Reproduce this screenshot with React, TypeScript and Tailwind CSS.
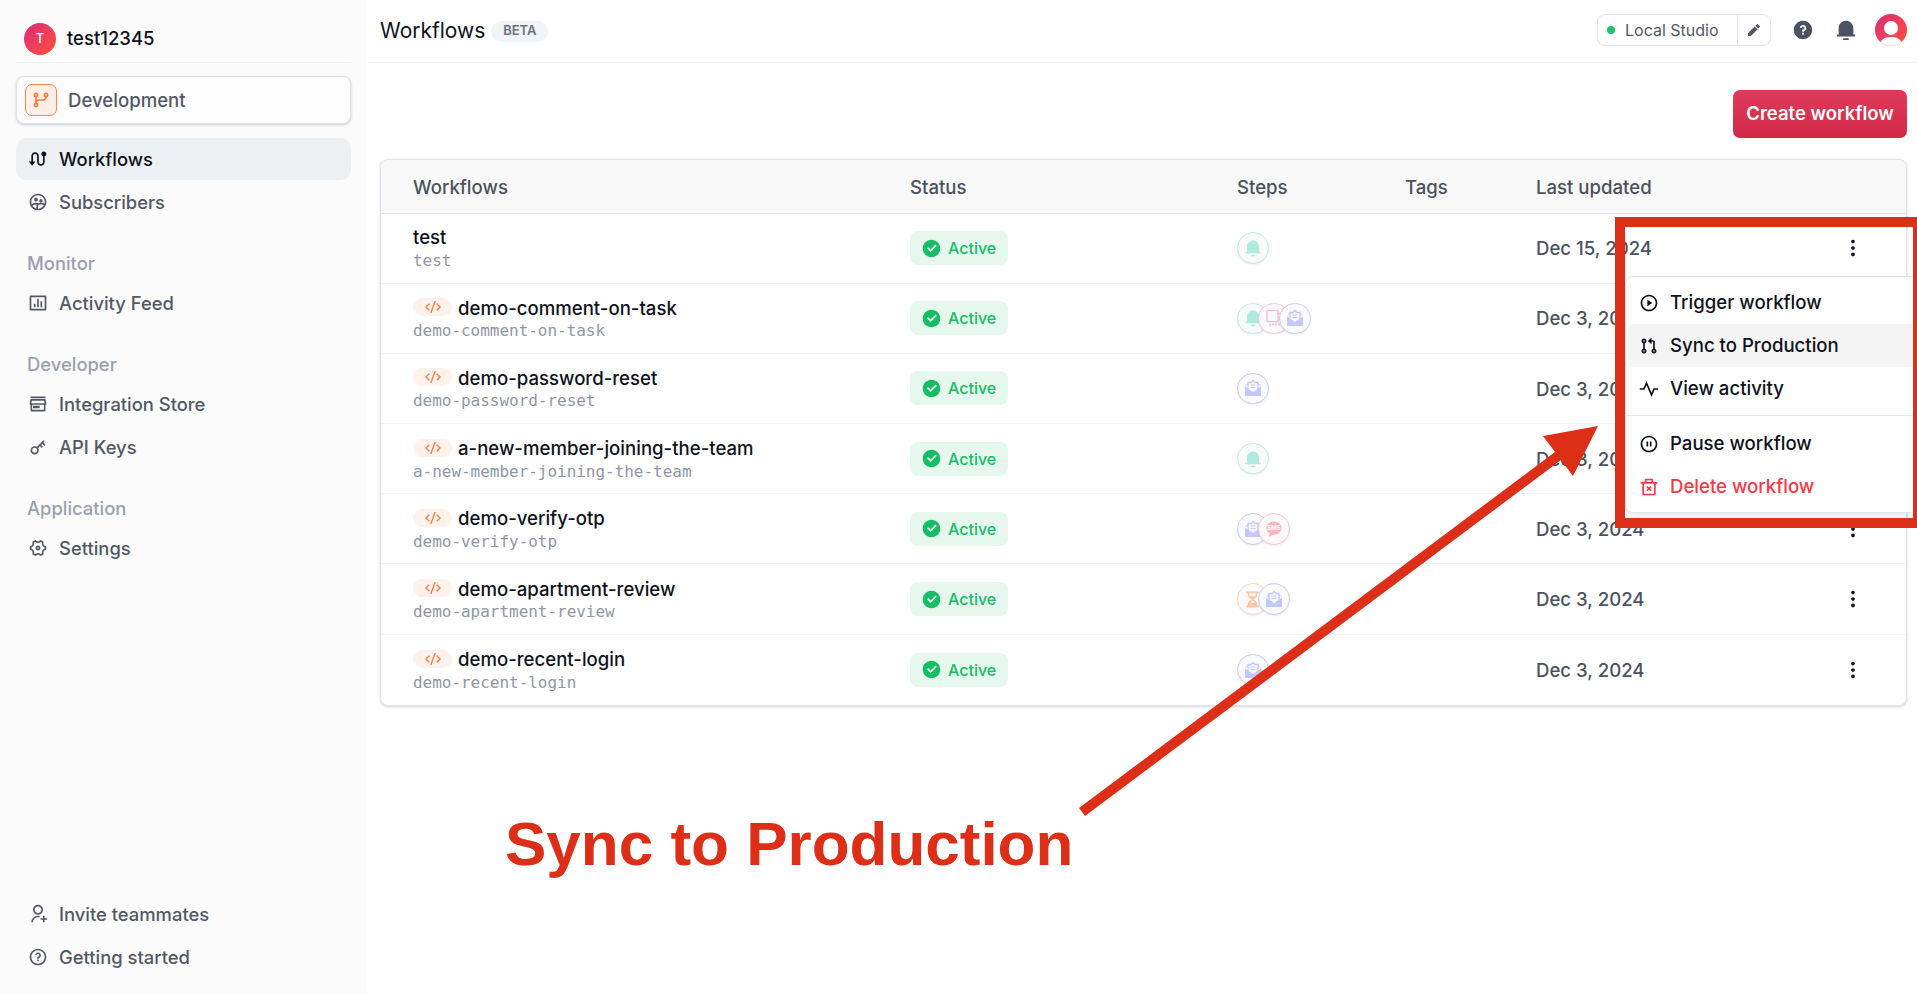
import type { ComponentType, ReactNode } from "react";
import {
  RiBarChartBoxLine,
  RiCheckboxCircleFill,
  RiCodeSSlashLine,
  RiDeleteBin2Line,
  RiGitBranchLine,
  RiGitPullRequestLine,
  RiGroup2Line,
  RiHourglassFill,
  RiKey2Line,
  RiMore2Fill,
  RiNotification3Fill,
  RiPauseCircleLine,
  RiPencilFill,
  RiPlayCircleLine,
  RiPulseFill,
  RiQuestionFill,
  RiQuestionLine,
  RiRouteFill,
  RiSettings4Line,
  RiStore3Line,
  RiUserAddLine,
} from "react-icons/ri";

type IconType = ComponentType<{ className?: string }>;
type Step = "bell" | "mail" | "layout" | "sms" | "wait";

const rows: { name: string; code: boolean; steps: Step[]; date: string }[] = [
  { name: "test", code: false, steps: ["bell"], date: "Dec 15, 2024" },
  { name: "demo-comment-on-task", code: true, steps: ["bell", "layout", "mail"], date: "Dec 3, 2024" },
  { name: "demo-password-reset", code: true, steps: ["mail"], date: "Dec 3, 2024" },
  { name: "a-new-member-joining-the-team", code: true, steps: ["bell"], date: "Dec 3, 2024" },
  { name: "demo-verify-otp", code: true, steps: ["mail", "sms"], date: "Dec 3, 2024" },
  { name: "demo-apartment-review", code: true, steps: ["wait", "mail"], date: "Dec 3, 2024" },
  { name: "demo-recent-login", code: true, steps: ["mail"], date: "Dec 3, 2024" },
];

function NavItem({ icon: Icon, label, active }: { icon: IconType; label: string; active?: boolean }) {
  return (
    <div
      className={`flex h-[42px] items-center gap-[11px] rounded-[10px] px-3 text-[18.4px] font-medium ${
        active ? "bg-[#edf0f3] text-[#0e121b]" : "text-[#525866]"
      }`}
    >
      <Icon className="h-5 w-5 shrink-0" />
      <span className="pt-[1px]">{label}</span>
    </div>
  );
}

function NavSection({ title, children }: { title: string; children: ReactNode }) {
  return (
    <div className="mt-[28px] flex flex-col gap-px">
      <div className="mb-[6px] h-6 px-[11px] text-[18.4px] font-medium leading-6 text-[#99a0ae]">{title}</div>
      {children}
    </div>
  );
}

function Sidebar() {
  return (
    <aside className="flex h-full w-[367px] shrink-0 flex-col bg-[#fbfbfb] px-4 pb-4">
      <div className="flex h-[63px] items-center gap-[11px] border-b border-[#eff0f4] pl-2 pt-[16px]">
        <div className="flex h-8 w-8 items-center justify-center rounded-full bg-gradient-to-br from-[#dd2476] to-[#ff512f] text-[13px] font-medium text-white">
          T
        </div>
        <span className="text-[18.5px] font-medium text-[#0e121b]">test12345</span>
      </div>
      <div className="mt-[13px] flex h-[48px] items-center gap-[11px] rounded-[8px] border border-[#dfe3ec] bg-[#fdfdfd] pl-2 text-[18.6px] font-medium text-[#525866] shadow-[0_1px_3px_rgba(14,18,27,0.2)]">
        <div className="flex h-8 w-8 items-center justify-center rounded-[7px] border border-[#ff8447] bg-[#fdeee6] text-[#ff7a3d]">
          <RiGitBranchLine className="h-5 w-5" />
        </div>
        <span className="pt-[1px]">Development</span>
      </div>
      <div className="mt-[14px] flex flex-col gap-px">
        <NavItem icon={RiRouteFill} label="Workflows" active />
        <NavItem icon={RiGroup2Line} label="Subscribers" />
      </div>
      <NavSection title="Monitor">
        <NavItem icon={RiBarChartBoxLine} label="Activity Feed" />
      </NavSection>
      <NavSection title="Developer">
        <NavItem icon={RiStore3Line} label="Integration Store" />
        <NavItem icon={RiKey2Line} label="API Keys" />
      </NavSection>
      <NavSection title="Application">
        <NavItem icon={RiSettings4Line} label="Settings" />
      </NavSection>
      <div className="mt-auto flex flex-col gap-px">
        <NavItem icon={RiUserAddLine} label="Invite teammates" />
        <NavItem icon={RiQuestionLine} label="Getting started" />
      </div>
    </aside>
  );
}

function TopBar() {
  return (
    <header className="flex h-[63px] shrink-0 items-center justify-between border-b border-[#f2f3f6] pl-[13px] pr-[10px]">
      <div className="flex items-center gap-[6px]">
        <h1 className="text-[21px] font-normal text-[#0e121b]">Workflows</h1>
        <span className="flex h-[21px] w-[57px] items-center justify-center rounded-full bg-[#f0f3f8] text-[13px] font-semibold text-[#6b7280]">
          BETA
        </span>
      </div>
      <div className="mb-[2px] flex items-center">
        <div className="flex h-[32px] w-[174px] items-center rounded-[8px] border border-[#e1e4ea] text-[#525866]">
          <span className="ml-[9px] h-2 w-2 rounded-full bg-[#1fc16b]" />
          <span className="ml-[10px] text-[16px] font-normal">Local Studio</span>
          <span className="ml-auto flex h-full w-[33px] items-center justify-center border-l border-[#e1e4ea]">
            <RiPencilFill className="h-4 w-4" />
          </span>
        </div>
        <RiQuestionFill className="ml-[21px] h-[22px] w-[22px] text-[#4b5260]" />
        <RiNotification3Fill className="ml-[21px] h-[22px] w-[22px] text-[#4b5260]" />
        <div className="relative ml-[18px] h-8 w-8 overflow-hidden rounded-full bg-gradient-to-br from-[#dd2476] to-[#ff512f]">
          <span className="absolute left-[9px] top-[7px] h-[14px] w-[14px] rounded-full bg-white" />
          <span className="absolute left-[4px] top-[23px] h-[20px] w-[24px] rounded-full bg-white" />
        </div>
      </div>
    </header>
  );
}

function StepIcon({ type, index }: { type: Step; index: number }) {
  const styles: Record<Step, string> = {
    bell: "border-[#b8f0e2] text-[#aeeadd]",
    mail: "border-[#c6ccff] text-[#c2c8ff]",
    layout: "border-[#fbc6e0] text-[#fbb9d8]",
    sms: "border-[#fdc3c9] text-[#fdb6bd]",
    wait: "border-[#fbd6c2] text-[#fbc6a6]",
  };
  return (
    <div
      className={`flex h-[31.5px] w-[31.5px] shrink-0 items-center justify-center rounded-full border bg-[#fafafa] shadow-[0_1px_2px_rgba(14,18,27,0.08)] ${styles[type]} ${
        index > 0 ? "-ml-[10.5px]" : ""
      }`}
    >
      {type === "bell" && <RiNotification3Fill className="h-[18px] w-[18px]" />}
      {type === "mail" && (
        <svg viewBox="0 0 20 20" className="h-[20px] w-[20px]" fill="none">
          <path d="M2 8.500 10 14l8-5.500V17a1 1 0 0 1-1 1H3a1 1 0 0 1-1-1z" fill="currentColor" />
          <path d="M5 12V4.500h3l2-2 2 2h3V12" stroke="currentColor" strokeWidth="1.300" />
          <path d="M7.500 7h5M7.500 9.500h5" stroke="currentColor" strokeWidth="1.100" />
          <path d="M2.500 7.500 5 5.500M17.500 7.500 15 5.500" stroke="currentColor" strokeWidth="1" />
        </svg>
      )}
      {type === "wait" && <RiHourglassFill className="h-[19px] w-[19px]" />}
      {type === "layout" && (
        <svg viewBox="0 0 20 20" className="h-[20px] w-[20px]" fill="none" stroke="currentColor" strokeWidth="1.3">
          <rect x="3" y="2.5" width="11" height="11" />
          <path d="M14 5.5h3M17 5.5v10M5 16.5h12" strokeDasharray="2 1" />
        </svg>
      )}
      {type === "sms" && (
        <svg viewBox="0 0 20 20" className="h-[20px] w-[20px]">
          <path d="M10 2.5c4.4 0 7.6 2.9 7.6 6.6s-3.2 6.6-7.6 6.6H9l-4 2.4.6-3.5C3.6 13.300 2.400 11.400 2.400 9.100c0-3.700 3.200-6.600 7.600-6.600z" fill="currentColor" />
          <text x="10" y="11.300" textAnchor="middle" fontSize="6" fontWeight="700" fill="#fff" fontFamily="Inter, sans-serif">
            SMS
          </text>
        </svg>
      )}
    </div>
  );
}

function WorkflowRow({ row }: { row: (typeof rows)[number] }) {
  return (
    <div className="grid h-[70.2px] grid-cols-[497px_327px_168px_131px_1fr] items-center border-b border-[#f2f3f6] pl-[32px] last:border-b-0">
      <div className="pt-[1px]">
        <div className="flex h-[24px] items-center gap-[6px] text-[18.6px] font-medium leading-6 text-[#0e121b]">
          {row.code && (
            <span className="flex h-[18px] w-[39px] items-center justify-center rounded-full bg-[#fff1eb] text-[#ff7a3d]">
              <RiCodeSSlashLine className="h-[16px] w-[16px]" />
            </span>
          )}
          <span className={row.code ? "pt-[1px]" : ""}>{row.name}</span>
        </div>
        <div className="text-[16px] leading-[23px] text-[#9096a6] [font-family:'DejaVu_Sans_Mono',monospace] tracking-[-0.03px]">
          {row.name}
        </div>
      </div>
      <div>
        <span className="inline-flex h-[34px] w-[98px] items-center rounded-[8px] bg-[#e6f8ee] pl-[11px] text-[16px] font-medium text-[#17bd65]">
          <RiCheckboxCircleFill className="mr-[6px] h-[21px] w-[21px]" />
          Active
        </span>
      </div>
      <div className="flex items-center">
        {row.steps.map((s, i) => (
          <StepIcon key={s + i} type={s} index={i} />
        ))}
      </div>
      <div />
      <div className="flex items-center justify-between pr-[42px] text-[18.6px] font-medium text-[#4b5260]">
        <span className="pt-[2px]">{row.date}</span>
        <RiMore2Fill className="h-[22px] w-[22px] text-[#0e121b]" />
      </div>
    </div>
  );
}

function WorkflowTable() {
  return (
    <div className="overflow-hidden rounded-[8px] border border-[#e1e4ea] bg-white shadow-[0_1px_3px_rgba(14,18,27,0.18)]">
      <div className="grid h-[53.5px] grid-cols-[497px_327px_168px_131px_1fr] items-center border-b border-[#e1e4ea] bg-[#f8f8f8] pl-[32px] pt-[3px] text-[18.6px] font-medium text-[#4b5260]">
        <span>Workflows</span>
        <span>Status</span>
        <span>Steps</span>
        <span>Tags</span>
        <span>Last updated</span>
      </div>
      {rows.map((row) => (
        <WorkflowRow key={row.name} row={row} />
      ))}
    </div>
  );
}

function MenuItem({ icon: Icon, label, active, danger }: { icon: IconType; label: string; active?: boolean; danger?: boolean }) {
  return (
    <div
      className={`mx-[2px] flex h-[43px] items-center gap-[11px] rounded-[7px] pl-[11px] text-[18.6px] font-medium ${
        active ? "bg-[#f4f4f5]" : ""
      } ${danger ? "text-[#fb3748]" : "text-[#0e121b]"}`}
    >
      <Icon className="h-[20px] w-[20px] shrink-0" />
      <span>{label}</span>
    </div>
  );
}

export default function App() {
  return (
    <div className="relative flex h-screen w-full overflow-hidden bg-white [font-family:Inter,sans-serif]">
      <Sidebar />
      <main className="flex min-w-0 flex-1 flex-col">
        <TopBar />
        <div className="flex flex-col pl-[13px] pr-[10px] pt-[27px]">
          <div className="flex justify-end">
            <button className="h-[48px] w-[174px] rounded-[7px] bg-gradient-to-b from-[#de3b5c] to-[#d32947] pb-[1px] text-[18.5px] font-semibold text-white">
              Create workflow
            </button>
          </div>
          <div className="mt-[21px]">
            <WorkflowTable />
          </div>
        </div>
      </main>

      {/* row menu */}
      <div className="absolute left-[1625px] top-[276px] h-[237px] w-[295px] rounded-[8px] border border-[#e1e4ea] bg-white pt-[4px] shadow-[0_4px_12px_rgba(14,18,27,0.1)]">
        <MenuItem icon={RiPlayCircleLine} label="Trigger workflow" />
        <MenuItem icon={RiGitPullRequestLine} label="Sync to Production" active />
        <MenuItem icon={RiPulseFill} label="View activity" />
        <div className="mb-[6px] mt-[5px] border-t border-[#e1e4ea]" />
        <MenuItem icon={RiPauseCircleLine} label="Pause workflow" />
        <MenuItem icon={RiDeleteBin2Line} label="Delete workflow" danger />
      </div>

      {/* annotation */}
      <div className="absolute left-[1615px] top-[217px] h-[311px] w-[308px] border-[10px] border-[#dd2e18]" />
      <svg className="absolute left-0 top-0 h-[994px] w-[1917px]" viewBox="0 0 1917 994" fill="#dd2e18">
        <polygon points="1079,808 1085,816 1561,460 1573,476 1598,426 1543,436 1555,452" />
      </svg>
      <div className="absolute left-[505px] top-[808px] text-[62px] font-bold leading-[72px] text-[#dd2e18] [font-family:'Liberation_Sans',sans-serif]">
        Sync to Production
      </div>
    </div>
  );
}
